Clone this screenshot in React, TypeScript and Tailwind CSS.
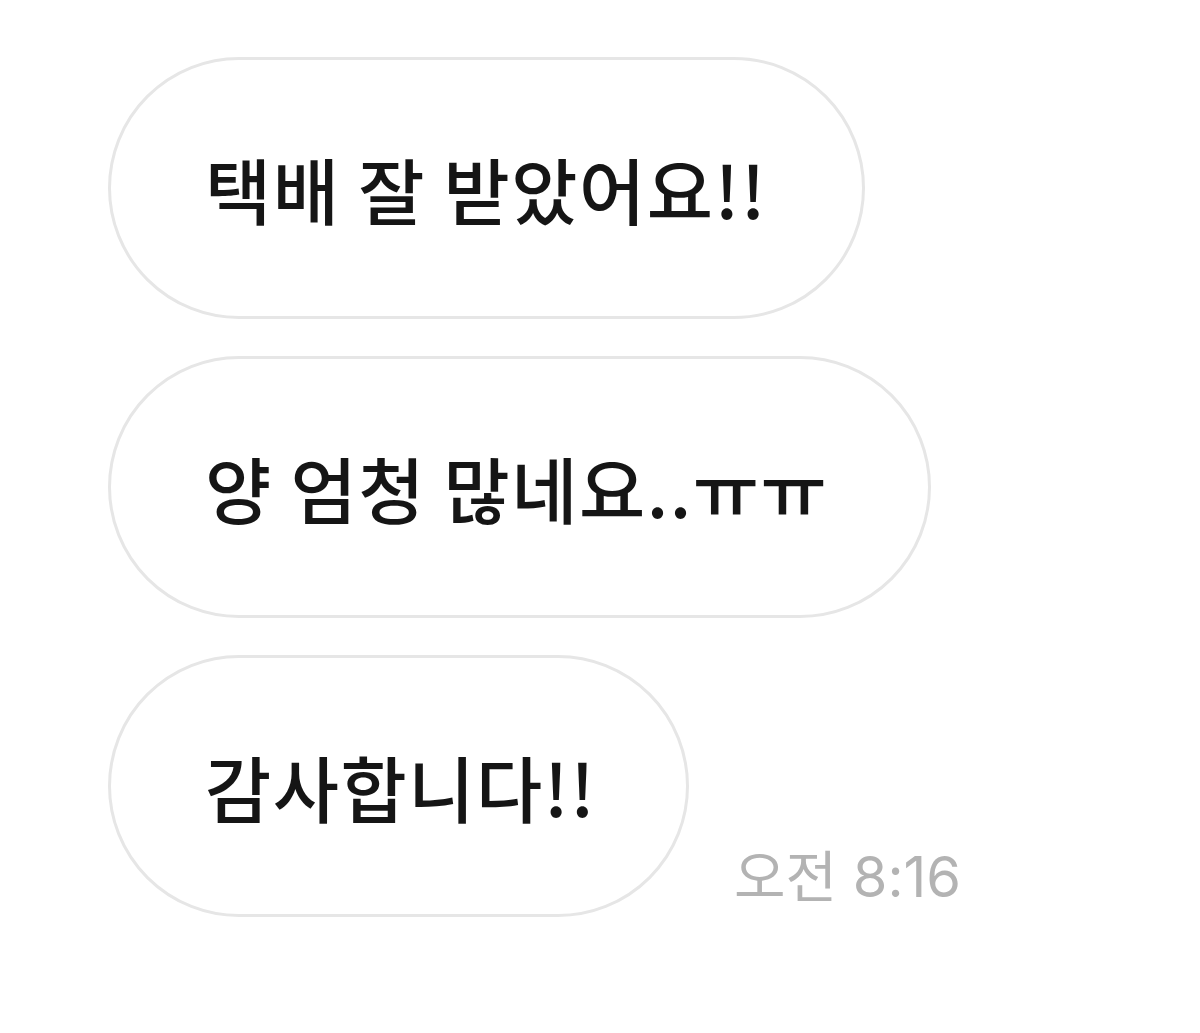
import React from "react";

const font = { fontFamily: '"Noto Sans CJK KR", "Noto Sans", sans-serif' };

function Bubble({ text, w }: { text: string; w: string }) {
  return (
    <div
      className={`${w} h-[262px] rounded-full border-[3px] border-[#e6e6e6] bg-white flex items-center pl-[94px] shrink-0`}
    >
      <span className="text-[72px] leading-none font-medium text-[#151515] whitespace-nowrap tracking-[1.5px]">{text}</span>
    </div>
  );
}

export default function App() {
  return (
    <div className="w-[1200px] h-[1033px] bg-white pl-[108px] pt-[57px]" style={font}>
      <div className="flex flex-col gap-[37px]">
        <Bubble text="택배 잘 받았어요!!" w="w-[757px]" />
        <Bubble text="양 엄청 많네요..ㅠㅠ" w="w-[823px]" />
        <div className="flex items-end gap-[45px]">
          <Bubble text="감사합니다!!" w="w-[581px]" />
          <span
            className="text-[56px] leading-none text-[#b3b3b3] whitespace-nowrap pb-[12px]"
            style={{ fontFamily: 'Inter, "Noto Sans CJK KR", sans-serif' }}
          >
            오전 8:16
          </span>
        </div>
      </div>
    </div>
  );
}
